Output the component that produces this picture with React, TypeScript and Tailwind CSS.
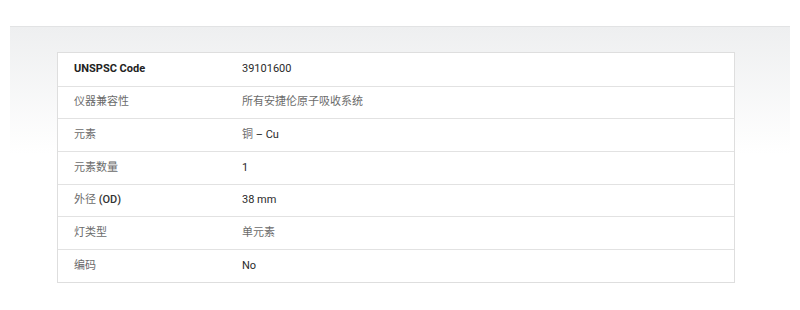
import React from "react";

const cjk = "font-['Roboto','Noto_Sans_CJK_SC',sans-serif]";

type Part = { t: string; cn?: boolean };
const rows: { label: Part[]; value: Part[]; bold?: boolean }[] = [
  { label: [{ t: "UNSPSC Code" }], value: [{ t: "39101600" }], bold: true },
  { label: [{ t: "仪器兼容性", cn: true }], value: [{ t: "所有安捷伦原子吸收系统", cn: true }] },
  { label: [{ t: "元素", cn: true }], value: [{ t: "铜", cn: true }, { t: " – Cu" }] },
  { label: [{ t: "元素数量", cn: true }], value: [{ t: "1" }] },
  { label: [{ t: "外径", cn: true }, { t: " (OD)" }], value: [{ t: "38 mm" }] },
  { label: [{ t: "灯类型", cn: true }], value: [{ t: "单元素", cn: true }] },
  { label: [{ t: "编码", cn: true }], value: [{ t: "No" }] },
];

function Text({ parts, bold, isLabel }: { parts: Part[]; bold?: boolean; isLabel?: boolean }) {
  return (
    <span>
      {parts.map((p, i) =>
        p.cn ? (
          <span key={i} className="text-[#6b6b6b] font-normal">
            {p.t}
          </span>
        ) : (
          <span
            key={i}
            className={
              bold
                ? "text-[#222] font-bold"
                : isLabel
                ? "text-[#333] font-medium"
                : "text-[#2a2a2a] font-normal"
            }
          >
            {p.t}
          </span>
        )
      )}
    </span>
  );
}

export default function App() {
  return (
    <div className={`w-[800px] h-[310px] bg-white pt-[26px] ${cjk}`}>
      <div className="mx-[10px] w-[780px] h-[284px] border-t border-[#e2e3e4] bg-gradient-to-b from-[#eeeff0] via-white via-[45%] to-white pt-[25px] pl-[47px]">
        <div className="w-[678px] border border-[#dedede] bg-white">
          {rows.map((r, i) => (
            <div
              key={i}
              className={`flex items-center h-[32.7px] text-[11px] ${i > 0 ? "border-t border-[#e2e2e2]" : ""}`}
            >
              <div className="w-[184px] pl-[16px]">
                <Text parts={r.label} bold={r.bold} isLabel />
              </div>
              <div>
                <Text parts={r.value} />
              </div>
            </div>
          ))}
        </div>
      </div>
    </div>
  );
}
